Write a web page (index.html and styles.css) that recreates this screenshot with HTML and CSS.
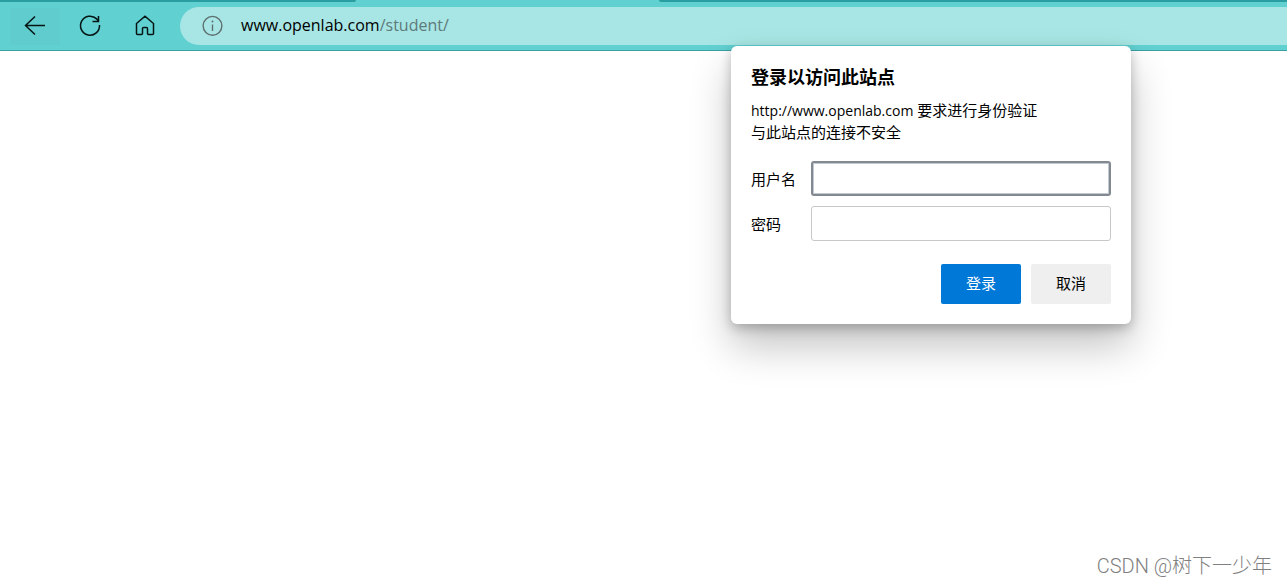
FILE: index.html
```html
<!DOCTYPE html>
<html lang="zh-CN">
  <head>
    <meta charset="utf-8">
    <title>www.openlab.com/student/</title>
    <link rel="stylesheet" href="styles.css">
  </head>

  <body>

  <header class="browser">
    <div class="tab-strip">
      <div class="tabs-left"></div>
      <div class="tabs-right"></div>
    </div>

    <nav class="toolbar">
      <button class="nav-button back-button" aria-label="返回">
        <svg width="24" height="24" viewBox="0 0 24 24"><path d="M22 11.500H2.500M12 2.500L2.500 11.500l9.500 9"/></svg>
      </button>
      <button class="nav-button" aria-label="刷新">
        <svg width="24" height="24" viewBox="0 0 24 24"><path d="M21.500 11A9.500 9.500 0 1 1 18.700 4.900L20.500 7M20.500 2v5.500h-6"/></svg>
      </button>
      <button class="nav-button" aria-label="主页">
        <svg width="24" height="24" viewBox="0 0 24 24"><path d="M3.500 9.500L12 2.200l8.500 7.300V19.500a1 1 0 0 1-1 1H15.500a1 1 0 0 1-1-1V14.500a1 1 0 0 0-1-1h-3a1 1 0 0 0-1 1v5a1 1 0 0 1-1 1H4.500a1 1 0 0 1-1-1z"/></svg>
      </button>

      <div class="address-bar">
        <svg class="info-icon" width="22" height="22" viewBox="0 0 22 22"><circle cx="11.500" cy="10.800" r="9.400"/><path d="M11.500 9.500v6.500"/><circle class="dot" cx="11.500" cy="6.500" r="1"/></svg>
        <span class="url">www.openlab.com<span class="url-path">/student/</span></span>
      </div>
    </nav>
  </header>

  <form class="login-dialog">
    <h1>登录以访问此站点</h1>
    <p><span class="host">http://www.openlab.com</span> 要求进行身份验证</p>
    <p>与此站点的连接不安全</p>

    <div class="fields">
      <label for="username">用户名</label>
      <input type="text" id="username" class="active-input">
      <label for="password">密码</label>
      <input type="password" id="password">
    </div>

    <div class="actions">
      <button type="submit" class="login-button">登录</button>
      <button type="button" class="cancel-button">取消</button>
    </div>
  </form>

  <footer class="watermark">CSDN @树下一少年</footer>

  </body>
</html>
```

FILE: styles.css
```css
* {
  box-sizing: border-box;
}

body {
  margin: 0;
  min-height: 100vh;
  display: flex;
  flex-direction: column;
  position: relative;
  overflow: hidden;
  background-color: white;
  color: black;
  font-family: "Open Sans", "Noto Sans CJK SC", sans-serif;
  font-size: 15px;
}

button,
input {
  font: inherit;
}

.browser {
  background-color: #61d0d1;
  border-bottom: 1px solid #3ba0a2;
}

.tab-strip {
  display: flex;
  justify-content: space-between;
  height: 2px;
}

.tabs-left,
.tabs-right {
  background-color: #2a9da0;
}

.tabs-left {
  width: 356px;
  border-bottom-right-radius: 2px;
}

.tabs-right {
  width: calc(100% - 659px);
  border-bottom-left-radius: 2px;
}

.toolbar {
  display: flex;
  align-items: center;
  gap: 5px;
  height: 48px;
  padding-left: 10px;
}

.nav-button {
  display: flex;
  align-items: center;
  justify-content: center;
  width: 50px;
  height: 37px;
  padding: 0;
  border: none;
  background-color: transparent;
  cursor: pointer;
}

.back-button {
  background-color: #60cccd;
}

.nav-button svg {
  fill: none;
  stroke: #061414;
  stroke-width: 1.5;
}

.address-bar {
  flex: 1;
  display: flex;
  align-items: center;
  gap: 18px;
  height: 38px;
  margin-left: 5px;
  padding-left: 21px;
  border-radius: 19px 0 0 19px;
  background-color: #a7e6e4;
}

.info-icon {
  fill: none;
  stroke: #5f6f6f;
  stroke-width: 1.4;
}

.info-icon .dot {
  fill: #5f6f6f;
  stroke: none;
}

.url {
  padding-bottom: 2px;
  font-size: 16px;
}

.url-path {
  color: #5f7a7a;
}

.login-dialog {
  position: absolute;
  top: 46px;
  right: 156px;
  width: 400px;
  padding: 19px 20px 20px;
  border-radius: 6px;
  background-color: white;
  box-shadow: 0 22px 40px rgba(0, 0, 0, 0.24), 0 4px 12px rgba(0, 0, 0, 0.24);
}

.login-dialog h1 {
  margin: 0 0 10px;
  font-size: 18px;
  line-height: 24px;
}

.login-dialog p {
  margin: 0;
  line-height: 22px;
}

.login-dialog .host {
  font-size: 14px;
  line-height: 18px;
}

.fields {
  display: grid;
  grid-template-columns: 60px 1fr;
  align-items: center;
  row-gap: 10px;
  margin-top: 18px;
}

.fields input {
  width: 100%;
  height: 35px;
  padding: 0 8px;
  border: 1px solid #c8c8c8;
  border-radius: 3px;
  outline: none;
  background-color: white;
}

.fields .active-input {
  border: 2px solid #838990;
  box-shadow: inset 0 0 0 1px #c3c9d0;
}

.actions {
  display: flex;
  justify-content: flex-end;
  gap: 10px;
  margin-top: 23px;
}

.actions button {
  width: 80px;
  height: 40px;
  padding: 0 0 3px;
  border: none;
  border-radius: 2px;
  cursor: pointer;
}

.actions .login-button {
  background-color: #0078d7;
  color: white;
}

.actions .cancel-button {
  background-color: #efefef;
  color: black;
}

.watermark {
  margin-top: auto;
  padding: 0 15px 5px;
  text-align: right;
  font-family: Roboto, "Noto Sans CJK SC", sans-serif;
  font-size: 20px;
  font-weight: 300;
  line-height: 30px;
  color: #808080;
}
```
